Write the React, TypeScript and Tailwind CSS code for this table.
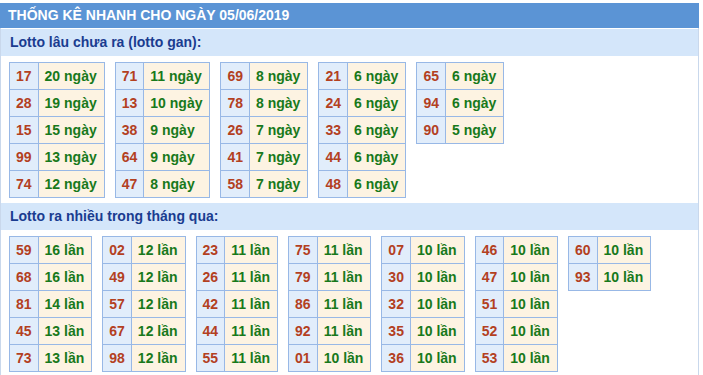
import * as React from 'react';

type Row = [string, string];

const ganTables: Row[][] = [
    [['17', '20'], ['28', '19'], ['15', '15'], ['99', '13'], ['74', '12']],
    [['71', '11'], ['13', '10'], ['38', '9'], ['64', '9'], ['47', '8']],
    [['69', '8'], ['78', '8'], ['26', '7'], ['41', '7'], ['58', '7']],
    [['21', '6'], ['24', '6'], ['33', '6'], ['44', '6'], ['48', '6']],
    [['65', '6'], ['94', '6'], ['90', '5']],
];

const hotTables: Row[][] = [
    [['59', '16'], ['68', '16'], ['81', '14'], ['45', '13'], ['73', '13']],
    [['02', '12'], ['49', '12'], ['57', '12'], ['67', '12'], ['98', '12']],
    [['23', '11'], ['26', '11'], ['42', '11'], ['44', '11'], ['55', '11']],
    [['75', '11'], ['79', '11'], ['86', '11'], ['92', '11'], ['01', '10']],
    [['07', '10'], ['30', '10'], ['32', '10'], ['35', '10'], ['36', '10']],
    [['46', '10'], ['47', '10'], ['51', '10'], ['52', '10'], ['53', '10']],
    [['60', '10'], ['93', '10']],
];

const LottoTable: React.FC<{ rows: Row[]; unit: string }> = ({ rows, unit }) => (
    <table className="border-collapse">
        <tbody>
            {rows.map(([num, count]) => (
                <tr key={num}>
                    <td className="border border-[#98b8e6] bg-[#e1edfb] pl-[6px] pr-[6px] py-[5px] leading-4 text-[#b3401f]">{num}</td>
                    <td className="border border-[#98b8e6] bg-[#fdf3e2] pl-[6px] pr-[7px] py-[5px] leading-4 text-[#18791b] whitespace-nowrap">{count} {unit}</td>
                </tr>
            ))}
        </tbody>
    </table>
);

const Section: React.FC<{ title: string; tables: Row[][]; unit: string }> = ({ title, tables, unit }) => (
    <div>
        <div className="h-[27px] flex items-center bg-[#d4e6fa] pl-[9px] text-[#1a3c90]">{title}</div>
        <div className="flex flex-wrap items-start gap-x-[10px] pl-[8px] pt-[6px] pb-[5px]">
            {tables.map((rows, i) => <LottoTable key={i} rows={rows} unit={unit} />)}
        </div>
    </div>
);

export default function App() {
    return (
        <div className="bg-white min-h-[375px] pt-[3px]" style={{ fontFamily: '"Liberation Sans", Arial, sans-serif' }}>
            <div className="w-[699px] text-[14px] font-bold">
                <div className="h-[25px] flex items-center bg-[#5b94d5] pl-[8px] text-white">THỐNG KÊ NHANH CHO NGÀY 05/06/2019</div>
                <div className="border-r border-l border-[#c9d8ec]">
                    <div className="pt-[1px]">
                        <Section title="Lotto lâu chưa ra (lotto gan):" tables={ganTables} unit="ngày" />
                    </div>
                    <Section title="Lotto ra nhiều trong tháng qua:" tables={hotTables} unit="lần" />
                </div>
            </div>
        </div>
    );
}
